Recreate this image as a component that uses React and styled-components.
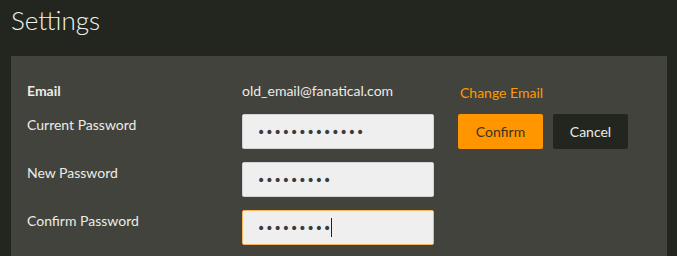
import React from "react";
import styled, { createGlobalStyle } from "styled-components";

const GlobalStyle = createGlobalStyle`
    html, body {
        margin: 0;
        padding: 0;
        background: #22261e;
    }
    body {
        font-family: Lato, "Open Sans", Arial, sans-serif;
        color: #ecece6;
    }
`;

const Page = styled.div`
    width: 677px;
    height: 256px;
    overflow: hidden;
    padding: 0 10px 0 11px;
    box-sizing: border-box;
`;

const Title = styled.h1`
    margin: 0;
    padding-top: 3px;
    height: 56px;
    box-sizing: border-box;
    font-size: 26px;
    font-weight: 300;
    color: #f2f2ee;
    line-height: 34px;
`;

const Panel = styled.div`
    background: #43433d;
    padding: 24px 16px 20px;
    display: grid;
    grid-template-columns: 191px 192px 1fr;
    grid-template-rows: 21px 35px 35px 35px;
    column-gap: 24px;
    row-gap: 13px;
`;

const Label = styled.div`
    font-size: 14px;
    line-height: 20px;
    padding-top: 1px;
    font-weight: ${(p) => (p.$bold ? 700 : 400)};
    color: #ecece6;
`;

const Value = styled.div`
    font-size: 14px;
    line-height: 20px;
    padding-top: 1px;
    color: #ecece6;
`;

const LinkButton = styled.a`
    font-size: 14px;
    line-height: 20px;
    padding-top: 3px;
    margin-left: 2px;
    color: #ff9a00;
    text-decoration: none;
    cursor: pointer;
`;

const Field = styled.div`
    box-sizing: border-box;
    height: 35px;
    background: #efefef;
    border: 1px solid ${(p) => (p.$focused ? "#f7b45a" : "#d3d3d3")};
    border-radius: 2px;
    padding: 0 14px;
    display: flex;
    align-items: center;
    color: #3b3b3b;
    font-size: 14px;
    font-family: "DejaVu Sans", sans-serif;
`;

const Caret = styled.span`
    display: inline-block;
    width: 1px;
    height: 19px;
    background: #222;
`;

const Actions = styled.div`
    display: flex;
    gap: 10px;
`;

const Button = styled.button`
    box-sizing: border-box;
    height: 35px;
    border: none;
    border-radius: 2px;
    padding: 0;
    width: ${(p) => p.$width}px;
    font-family: Lato, "Open Sans", Arial, sans-serif;
    font-size: 14px;
    background: ${(p) => (p.$primary ? "#ff9600" : "#22261e")};
    color: ${(p) => (p.$primary ? "#3a3420" : "#ecece6")};
    cursor: pointer;
`;

const Dots = ({ n }) => <span>{"•".repeat(n)}</span>;

const App = () => {
    return (
        <Page>
            <GlobalStyle />
            <Title>Settings</Title>
            <Panel>
                <Label $bold>Email</Label>
                <Value>old_email@fanatical.com</Value>
                <LinkButton>Change Email</LinkButton>

                <Label>Current Password</Label>
                <Field><Dots n={13} /></Field>
                <Actions>
                    <Button $primary $width={85}>Confirm</Button>
                    <Button $width={75}>Cancel</Button>
                </Actions>

                <Label>New Password</Label>
                <Field><Dots n={9} /></Field>
                <div />

                <Label>Confirm Password</Label>
                <Field $focused><Dots n={9} /><Caret /></Field>
                <div />
            </Panel>
        </Page>
    );
};

export default App;
